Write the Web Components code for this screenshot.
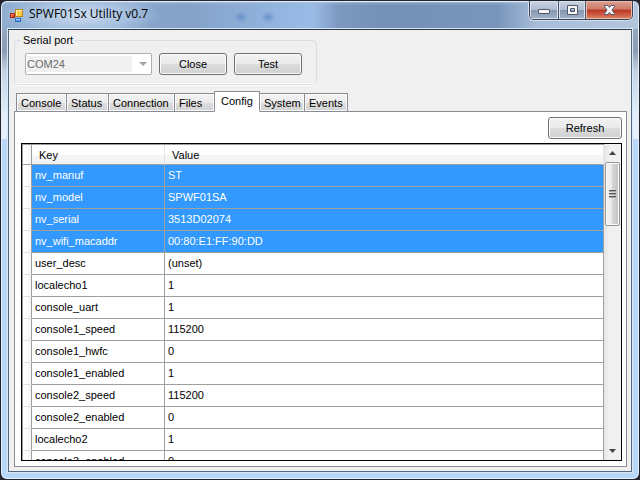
<!DOCTYPE html>
<html lang="en">
<head>
<meta charset="utf-8">
<title>SPWF01Sx Utility v0.7</title>
<style>
html, body { margin: 0; height: 100%; background: #25262e; }
body { font: 11px/14px "Liberation Sans", Arial, sans-serif; color: #000; overflow: hidden; }
.toolbar { display: flex; justify-content: flex-end; }
</style>
</head>
<body>
<app-window caption="SPWF01Sx Utility v0.7">
  <group-box caption="Serial port">
    <port-select label="Serial port" value="COM24"></port-select>
    <push-button width="68">Close</push-button>
    <push-button width="68">Test</push-button>
  </group-box>
  <tab-panel>
    <tab-item slot="tabs" style="--w:51px">Console</tab-item>
    <tab-item slot="tabs" style="--w:43px">Status</tab-item>
    <tab-item slot="tabs" style="--w:67px">Connection</tab-item>
    <tab-item slot="tabs" style="--w:41px">Files</tab-item>
    <tab-item slot="tabs" style="--w:46px" selected>Config</tab-item>
    <tab-item slot="tabs" style="--w:46px">System</tab-item>
    <tab-item slot="tabs" style="--w:44px">Events</tab-item>
    <div class="toolbar"><push-button width="74">Refresh</push-button></div>
    <config-grid></config-grid>
  </tab-panel>
</app-window>

<script>
function define(name, render) {
  customElements.define(name, class extends HTMLElement {
    connectedCallback() {
      if (this.shadowRoot) return;
      this.attachShadow({ mode: "open" }).innerHTML = render(this);
    }
  });
}

define("app-window", el => `
<style>
:host { display: flex; flex-direction: column; box-sizing: border-box; height: 100vh; padding: 0 7px 7px;
  border: 1px solid #20242e; border-radius: 7px; overflow: hidden;
  box-shadow: inset 0 0 0 1px #e6f1fb;
  background:
    linear-gradient(#a9bfda, transparent 4px) 0 0 / 100% 28px no-repeat,
    radial-gradient(ellipse 80px 24px at 80px 14px, #dce9f8cc, #b8cfeb99 60%, transparent) 0 0 / 100% 28px no-repeat,
    radial-gradient(ellipse 7px 6px at 240px 16px, #5f89c8cc, transparent) 0 0 / 100% 28px no-repeat,
    radial-gradient(ellipse 7px 6px at 267px 16px, #5f89c8cc, transparent) 0 0 / 100% 28px no-repeat,
    linear-gradient(90deg, #8fadd0, #84a2c8 30%, #8fb0da 40%, #9abbe5 49%, #7b98bf 53%, #7390b6 60%, #7896bc 78%, #a9bdd9 84%, #b4c6de) 0 0 / 100% 28px no-repeat,
    linear-gradient(#a4b8cf 0, #8d9db2 50px, #c4d4e4 70px, #e2eefb 115px, #e6f2ff 137px, #b9d8f9 139px); }
header { display: flex; align-items: flex-start; height: 28px; flex: none; }
.logo { margin: 8px 5px 0 2px; flex: none; }
h1 { margin: 5px 0 0; font: 12px/16px "Open Sans", "Noto Sans", sans-serif; flex: 1; white-space: nowrap; }
.controls { display: flex; border: 1px solid #3a4456; border-top: 0; border-radius: 0 0 5px 5px; overflow: hidden;
  margin-right: -1px; box-shadow: 0 0 0 1px #d4e0ef; }
button { padding: 0; border: 0; height: 18px; width: 28px; box-shadow: inset 0 0 0 1px #d9e3ee;
  background: linear-gradient(#cad4e2, #aebccf 48%, #8495ae 50%, #a1b2c8); display: grid; place-items: center; }
button + button { border-left: 1px solid #49566b; }
button.max { width: 27px; }
button.close { width: 47px; background: linear-gradient(#dca294, #cc7765 46%, #b93520 50%, #cf5a43 75%, #d88b68); box-shadow: inset 0 0 0 1px #edb9ac; }
main { flex: 1; min-height: 0; display: flex; flex-direction: column; background: #f0f0f0; border: 1px solid #56687f;
  border-top-color: #2d3745; box-shadow: 0 0 0 1px #d9e9f9; padding: 4px 4px 4px 5px; }
</style>
<header>
  <svg class="logo" width="14" height="13" viewBox="0 0 14 13" aria-hidden="true">
    <rect x="5.5" y=".5" width="7" height="7" fill="#f8cc48" stroke="#b58a20"/><path d="M6.500 7V1.500H12" stroke="#fff1aa" fill="none"/>
    <rect x=".5" y="4.500" width="4" height="4" fill="#d83b22" stroke="#a82a18"/><path d="M1.500 8V5.500H4" stroke="#f68c70" fill="none"/>
    <rect x="5.5" y="9.500" width="5" height="3" fill="#5698ed" stroke="#2f6fc4"/><path d="M6 10.500H10" stroke="#a5ceff"/>
  </svg>
  <h1>${el.getAttribute("caption")}</h1>
  <div class="controls">
    <button aria-label="Minimize"><svg width="14" height="14"><rect x="1.500" y="6.500" width="11" height="4" rx=".5" fill="#f6f6f7" stroke="#4e576b"/></svg></button>
    <button class="max" aria-label="Maximize"><svg width="13" height="12"><path fill="#f6f6f7" fill-rule="evenodd" stroke="#4e576b" d="M1.500 1.500h10v9h-10zM4.500 4.500h4v3h-4z"/></svg></button>
    <button class="close" aria-label="Close window"><svg width="13" height="12"><path fill="#f6f6f7" stroke="#4e576b" d="M1.500 1.500H5L6.500 3.500 8 1.500h3.500v1L9 6l2.500 3.500v1H8L6.500 8.500 5 10.500H1.500v-1L4 6 1.500 2.500z"/></svg></button>
  </div>
</header>
<main><slot></slot></main>`);

define("group-box", el => `
<style>
:host { display: block; width: 303px; flex: none; }
fieldset { margin: 0; padding: 7px 10px 9px; border: 1px solid #d5dfe5; border-radius: 4px; box-shadow: inset 0 -1px #fff, 0 1px #fff; min-width: 0; }
legend { padding: 0 2px; margin-left: -4px; line-height: 12px; }
div { display: flex; gap: 7px; }
</style>
<fieldset><legend>${el.getAttribute("caption")}</legend><div><slot></slot></div></fieldset>`);

define("port-select", el => `
<style>
:host { display: block; width: 127px; position: relative; }
select { appearance: none; box-sizing: border-box; width: 100%; height: 22px; padding: 0 20px 0 1px; font: inherit;
  color: #6d6d6d; opacity: 1; border: 1px solid #afafaf; border-radius: 2px;
  background: linear-gradient(#f0f0f0, #f0f0f0) 1px 2px / 105px 16px no-repeat #fff; }
svg { position: absolute; right: 5px; top: 9px; }
</style>
<select disabled aria-label="${el.getAttribute("label")}"><option>${el.getAttribute("value")}</option></select>
<svg width="8" height="5" aria-hidden="true"><path d="M0 0H8L4 4z" fill="#a3a3a3"/></svg>`);

define("push-button", el => `
<style>
:host { display: block; width: ${el.getAttribute("width")}px; }
button { box-sizing: border-box; width: 100%; height: 22px; padding: 0; border: 1px solid #707070; border-radius: 3px; font: inherit; color: inherit;
  background: linear-gradient(#f2f2f2, #ebebeb 48%, #dddddd 52%, #cfcfcf); box-shadow: inset 0 0 0 1px #fbfbfb; }
</style>
<button><slot></slot></button>`);

define("tab-panel", () => `
<style>
:host { display: flex; flex-direction: column; flex: 1; min-height: 0; margin-top: 6px; }
.strip { display: flex; align-items: flex-end; padding-left: 2px; height: 21px; flex: none; }
.page { flex: 1; min-height: 0; display: flex; flex-direction: column; gap: 4px; margin-top: -1px;
  border: 1px solid #898c95; background: #fff; padding: 5px 4px 5px 6px; }
</style>
<div class="strip" role="tablist"><slot name="tabs"></slot></div>
<div class="page" role="tabpanel"><slot></slot></div>`);

define("tab-item", el => {
  const on = el.hasAttribute("selected");
  return `
<style>
:host { display: block; width: var(--w); margin-right: -1px; ${on ? "position: relative;" : ""} }
button { display: block; box-sizing: border-box; width: 100%; height: 19px; border: 1px solid #898c95; padding: 0 4px; text-align: left; white-space: nowrap;
  font: inherit; color: inherit; border-radius: 0; background: linear-gradient(#f3f3f3, #ebebeb 50%, #dddddd 52%, #d2d2d2); box-shadow: inset 0 0 0 1px #fafafa; }
button[aria-selected=true] { height: 21px; padding: 0 6px 2px; background: #fff; border-bottom-color: #fff; box-shadow: none; }
</style>
<button role="tab" aria-selected="${on}"><slot></slot></button>`;
});

const settings = [
  ["nv_manuf", "ST"], ["nv_model", "SPWF01SA"], ["nv_serial", "3513D02074"], ["nv_wifi_macaddr", "00:80:E1:FF:90:DD"],
  ["user_desc", "(unset)"], ["localecho1", "1"], ["console_uart", "1"], ["console1_speed", "115200"],
  ["console1_hwfc", "0"], ["console1_enabled", "1"], ["console2_speed", "115200"], ["console2_enabled", "0"],
  ["localecho2", "1"], ["console3_enabled", "0"]
];

define("config-grid", () => `
<style>
:host { display: flex; flex: 1; min-height: 0; border: 1px solid #000; overflow: hidden; }
.view { flex: 1; min-width: 0; overflow: hidden; border: solid #a0a0a0; border-width: 1px 0 0 1px; }
table { width: 100%; table-layout: fixed; border-collapse: separate; border-spacing: 0; }
th, td { box-sizing: border-box; height: 22px; padding: 0 3px; border: solid #a0a0a0; border-width: 0 1px 1px 0; text-align: left; white-space: nowrap; font-weight: normal; }
td { padding-bottom: 1px; }
thead th { height: 20px; padding-left: 7px; border-right-color: #e2e4e7; background: linear-gradient(#fff 50%, #f4f5f7 52%, #f1f2f4); }
tr.sel td { background: #3399ff; color: #fff; }
table .mark, tr.sel td.mark { padding: 0; background: linear-gradient(90deg, #fff 40%, #f3f4f6); border-bottom-color: #dfe1e4; }
table thead .mark { border-bottom-color: #a0a0a0; border-right-color: #a0a0a0; }
scroll-bar { width: 17px; flex: none; }
</style>
<div class="view"><table>
<colgroup><col style="width:9px"><col style="width:133px"><col></colgroup>
<thead><tr><th class="mark"></th><th>Key</th><th>Value</th></tr></thead>
<tbody>${settings.map(([k, v], i) => `<tr class="${i < 4 ? "sel" : ""}"><td class="mark"></td><td>${k}</td><td>${v}</td></tr>`).join("")}</tbody>
</table></div><scroll-bar></scroll-bar>`);

define("scroll-bar", () => `
<style>
:host { display: flex; flex-direction: column; background: linear-gradient(90deg, #e5e5e5, #f0f0f0 30%, #f1f1f1); }
button { flex: none; height: 18px; padding: 0; border: 0; background: none; display: grid; place-items: center; }
.thumb { height: 64px; box-sizing: border-box; border: 1px solid #979797; border-radius: 2px; margin: 0 1px;
  background: linear-gradient(90deg, #f5f5f5, #eaeaea 45%, #d5d5d5 50%, #c4c4c4); box-shadow: inset 0 0 0 1px #fafafa; display: grid; place-items: center; }
.track { flex: 1; }
</style>
<button aria-label="Scroll up"><svg width="7" height="4"><path d="M0 4H7L3.500 0z" fill="#444"/></svg></button>
<div class="thumb"><svg width="7" height="9"><path d="M0 .5H7M0 3.500H7M0 6.500H7" stroke="#555"/><path d="M0 1.500H7M0 4.500H7M0 7.500H7" stroke="#aaa"/></svg></div>
<div class="track"></div>
<button aria-label="Scroll down"><svg width="7" height="4"><path d="M0 0H7L3.500 4z" fill="#444"/></svg></button>`);
</script>
</body>
</html>
